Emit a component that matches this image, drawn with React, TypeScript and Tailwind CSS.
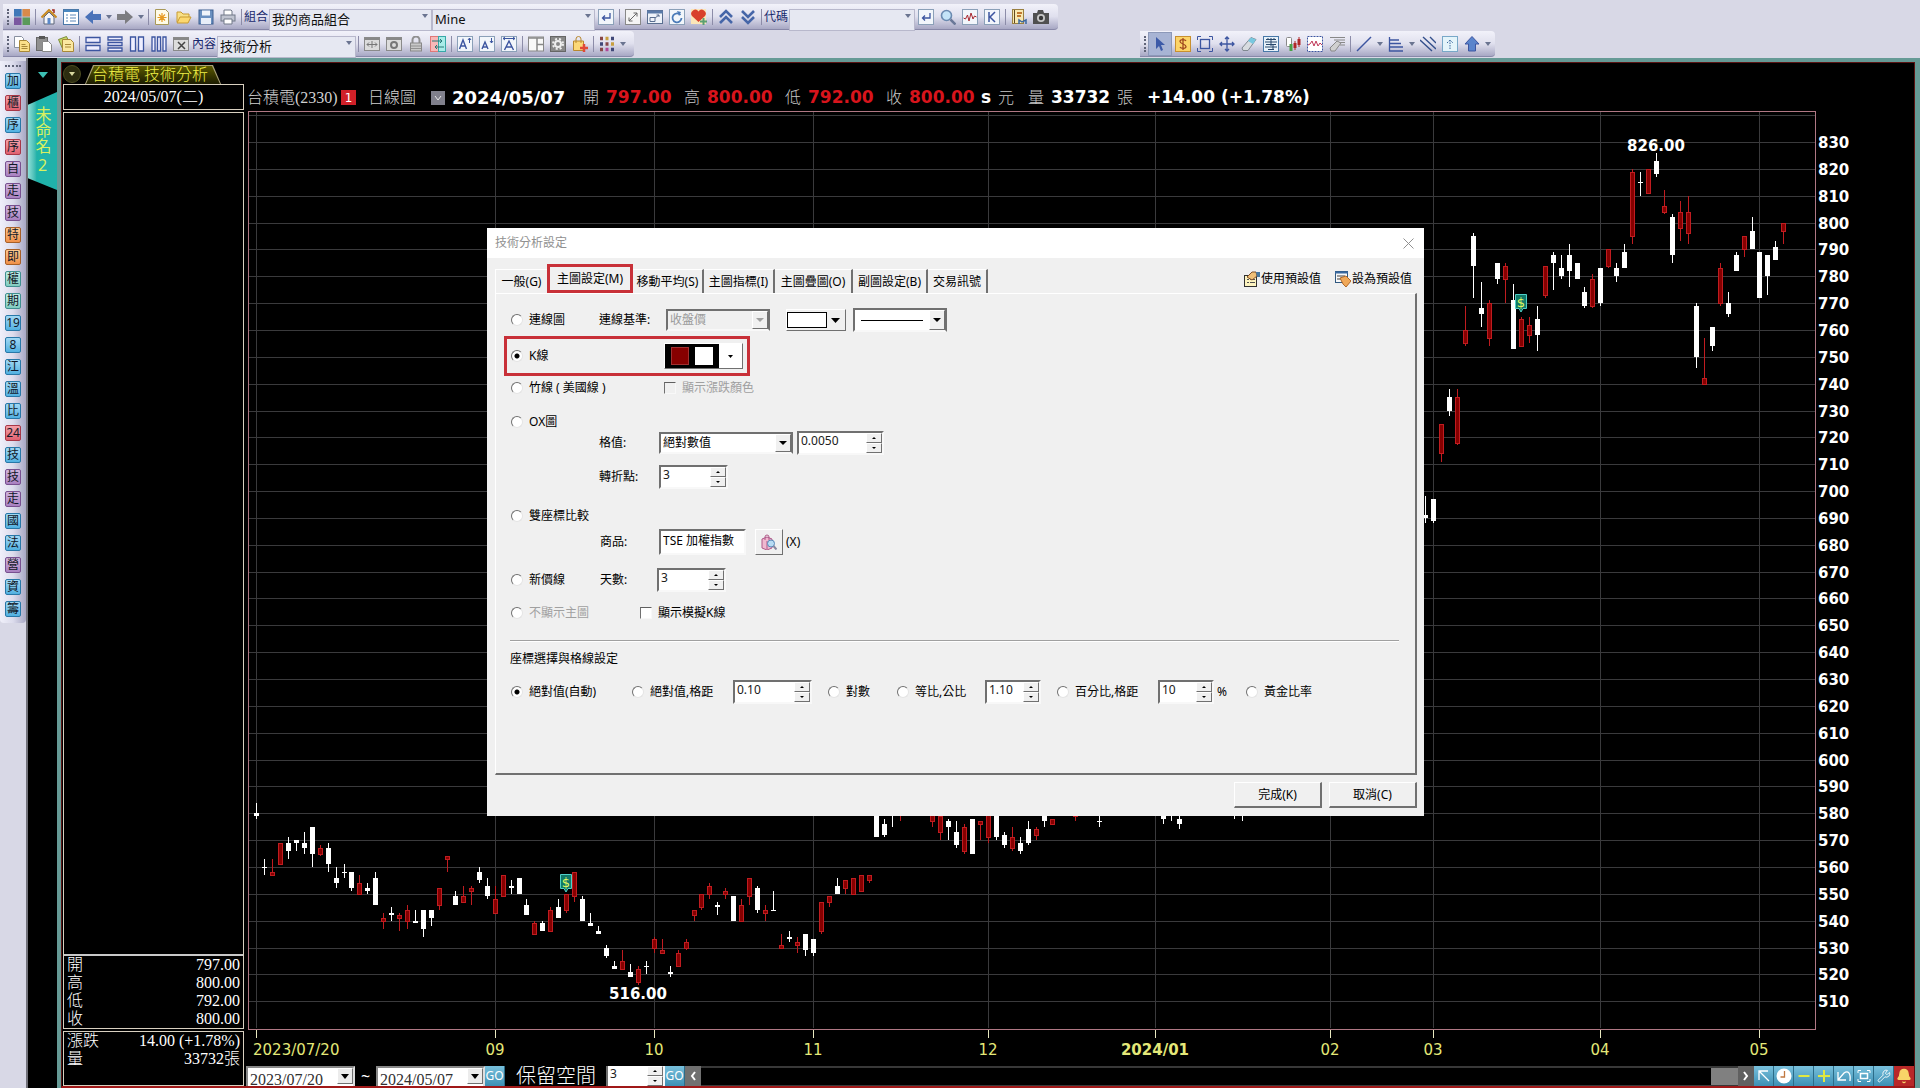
import type { ReactNode } from "react";
import { Bell, Wrench } from "lucide-react";

/* ---------- icons ---------- */

const ink = "#3c55a0";

const Svg = ({ children }: { children: ReactNode }) => (
  <svg viewBox="0 0 16 16" className="h-4 w-4 shrink-0" fill="none" aria-hidden="true">
    {children}
  </svg>
);

const frame = <rect x="0.5" y="0.5" width="15" height="15" fill="#f2f6fb" stroke="#8ba0b8" />;
const grayFrame = <rect x="0.5" y="1.5" width="15" height="13" fill="#dcdcdc" stroke="#8a8a8a" />;

const icons: Record<string, ReactNode> = {
  squares: (
    <>
      <rect x="0" y="0" width="8" height="8" fill="#3f78b8" />
      <rect x="8" y="0" width="8" height="8" fill="#d88a4a" />
      <rect x="0" y="8" width="8" height="8" fill="#7a58a0" />
      <rect x="8" y="8" width="8" height="8" fill="#5a9a5a" />
      <path d="M8 0v16M0 8h16" stroke="#b8c0d0" />
    </>
  ),
  home: (
    <>
      <path d="M3 8v7h10V8L8 3z" fill="#f4f4f8" stroke="#5a6478" />
      <path d="M0.5 8.5L8 1l7.500 7.500" stroke="#c88a20" strokeWidth="2" />
      <path d="M11 1h2v3" stroke="#a02820" strokeWidth="1.500" />
      <rect x="6.500" y="9" width="3" height="6" fill="#5a88c8" />
    </>
  ),
  panel: (
    <>
      <rect x="0.5" y="0.5" width="15" height="15" fill="#fff" stroke="#4a78a8" />
      <path d="M1 2h14" stroke="#4a88c0" strokeWidth="2" />
      <path d="M3 6h2M3 9h2M3 12h2M7 6h6M7 9h6M7 12h6" stroke="#5a88b8" />
    </>
  ),
  back: <path d="M0 8l8-7v4h8v6H8v4z" fill="#4a72b8" />,
  forward: <path d="M16 8L8 1v4H0v6h8v4z" fill="#7c7c80" />,
  fresh: (
    <>
      <path d="M1.500 0.500h10l3 3v12h-13z" fill="#fffbe8" stroke="#a89858" />
      <path d="M8 4v9M3.500 8.500h9M5 5.500l6 6M11 5.500l-6 6" stroke="#e89a20" strokeWidth="1.200" />
    </>
  ),
  open: (
    <>
      <path d="M1 13V3h4l2 2h6v3" fill="#f8e088" stroke="#c89a30" />
      <path d="M1 14l3-6h11l-3 6z" fill="#fcd870" stroke="#c89a30" />
    </>
  ),
  save: (
    <>
      <rect x="1" y="1" width="14" height="14" fill="#6a90c0" stroke="#3c5f90" />
      <rect x="4" y="1.500" width="8" height="5" fill="#f0f4fa" />
      <rect x="3" y="9" width="10" height="6" fill="#e8eef8" />
    </>
  ),
  print: (
    <>
      <path d="M4 6V1h7l1 1v4" fill="#fff" stroke="#707888" />
      <rect x="1" y="6" width="14" height="6" fill="#c0c4d0" stroke="#707888" />
      <path d="M4 10h8v5H4z" fill="#fff" stroke="#707888" />
    </>
  ),
  enter: (
    <>
      {frame}
      <path d="M12 4v5H5M7 6.500L4.500 9 7 11.500" stroke={ink} strokeWidth="1.300" />
    </>
  ),
  expand: (
    <>
      <rect x="0.5" y="0.5" width="15" height="15" fill="#f4f4f4" stroke="#888" />
      <path d="M4 12l8-8M8.500 4H12v3.500M4 8.500V12h3.500" stroke="#666" />
    </>
  ),
  popup: (
    <>
      <rect x="0.5" y="1.500" width="15" height="13" fill="#eef3fa" stroke="#5a6f90" />
      <path d="M0 3h16" stroke="#5a7aa8" strokeWidth="3" />
      <path d="M3 8.500h5v4H3zM8 9l4-3M9.500 6H12v2" stroke="#5a6f90" />
    </>
  ),
  refresh: (
    <>
      {frame}
      <path d="M11.500 6A4.500 4.500 0 1 0 12.500 9" stroke="#4a7ab8" strokeWidth="1.800" />
      <path d="M8 2l4 1-2 4z" fill="#4a7ab8" />
    </>
  ),
  heart: (
    <>
      <rect width="15" height="15" fill="#fbe6b8" />
      <path d="M7.500 13L1 7a3.500 3.500 0 0 1 6.500-4.500A3.500 3.500 0 0 1 14 7z" fill="#d8402c" />
      <path d="M12.500 9v7M9 12.500h7" stroke="#5aa070" strokeWidth="2" />
    </>
  ),
  up: <path d="M2 8l6-6 6 6M2 14l6-6 6 6" stroke="#4666a8" strokeWidth="2.600" />,
  down: <path d="M2 2l6 6 6-6M2 8l6 6 6-6" stroke="#4666a8" strokeWidth="2.600" />,
  search: (
    <>
      <circle cx="6.500" cy="6.500" r="5" fill="#c4e4f8" stroke="#6a8ab0" strokeWidth="1.600" />
      <path d="M10.500 10.500l5 5" stroke="#6a7898" strokeWidth="2.500" />
    </>
  ),
  wave: (
    <>
      {frame}
      <path d="M1.500 9l2 1 2-4 1.500 6 2-8 2 6 1.500-3 2 1" stroke="#a82830" />
    </>
  ),
  k: (
    <>
      {frame}
      <path d="M5 3v10M11 3L6 8l5 5" stroke={ink} strokeWidth="1.500" />
    </>
  ),
  book: (
    <>
      <rect x="1.500" y="0.500" width="11" height="14" fill="#f8e8b0" stroke="#9a8040" />
      <path d="M3.500 1v13" stroke="#604820" />
      <path d="M6 4h5M6 7h4" stroke="#c07830" strokeWidth="2" />
      <path d="M8 15v-4l3 2 4-2v4" stroke="#3c68a0" strokeWidth="1.500" />
    </>
  ),
  camera: (
    <>
      <path d="M0 4h4l1-3h5l1 3h5v11H0z" fill="#505050" />
      <circle cx="8" cy="9" r="4" fill="#c8c8c8" />
      <circle cx="8" cy="9" r="2.200" fill="#383838" />
    </>
  ),
  copy: (
    <>
      <path d="M0.500 0.500h7l2 2v9h-9z" fill="#fff" stroke="#8890a0" />
      <path d="M5.500 4.500h7l3 3v8h-10z" fill="#fbe08a" stroke="#a88838" />
      <path d="M7.500 8.500h4M7.500 10.500h6M7.500 12.500h6" stroke="#a88838" />
    </>
  ),
  paste: (
    <>
      <rect x="0.500" y="1.500" width="11" height="13" fill="#909090" stroke="#686868" />
      <rect x="3" y="0" width="6" height="3" fill="#555" />
      <path d="M6.500 5.500h6l3 3v7h-9z" fill="#fff" stroke="#888" />
    </>
  ),
  pages: (
    <>
      <path d="M0.500 3.500l8-3 4 9-8 3z" fill="#c8d868" stroke="#7a8a38" />
      <path d="M4.500 3.500h8l3 3v9h-11z" fill="#fbe8a0" stroke="#a88838" />
      <path d="M7 8.500h6M7 11h6" stroke="#a88838" />
    </>
  ),
  rows2: <path d="M1 1.500h14v5H1zM1 9.500h14v5H1z" fill="#eef" stroke={ink} strokeWidth="1.300" />,
  rows3: <path d="M1 1h14v3H1zM1 6.500h14v3H1zM1 12h14v3H1z" fill="#eef" stroke={ink} strokeWidth="1.300" />,
  cols2: <path d="M1.500 1h5v14h-5zM9.500 1h5v14h-5z" fill="#eef" stroke={ink} strokeWidth="1.300" />,
  cols3: <path d="M1 1h3v14H1zM6.500 1h3v14h-3zM12 1h3v14h-3z" fill="#eef" stroke={ink} strokeWidth="1.300" />,
  remove: (
    <>
      {grayFrame}
      <path d="M0 3h16" stroke="#888" strokeWidth="2" />
      <path d="M5 6l7 7M12 6l-7 7" stroke="#444" strokeWidth="1.500" />
    </>
  ),
  split: (
    <>
      {grayFrame}
      <path d="M1 3h14" stroke="#888" strokeWidth="2" />
      <path d="M3 8.500h10M5 6.500l-2 2 2 2M11 6.500l2 2-2 2M8 5v7" stroke="#777" />
    </>
  ),
  ring: (
    <>
      {grayFrame}
      <path d="M1 3h14" stroke="#888" strokeWidth="2" />
      <circle cx="8" cy="9" r="3" stroke="#777" strokeWidth="2" />
    </>
  ),
  lock: (
    <>
      <path d="M4.500 7V4a3.500 3.500 0 0 1 7 0v3" stroke="#909090" strokeWidth="2" />
      <rect x="2.500" y="7" width="11" height="8" fill="#c8c8c8" stroke="#888" />
      <path d="M3 10h10M3 12.500h10" stroke="#909090" />
    </>
  ),
  swap: (
    <>
      <rect x="0.500" y="0.500" width="8" height="15" fill="#f8b8b8" stroke="#e07878" />
      <rect x="8.500" y="0.500" width="7" height="15" fill="#a8ece8" stroke="#38a8a8" />
      <path d="M2 5h10M10 3l2 2-2 2M14 11H5M7 9l-2 2 2 2" stroke="#287878" />
    </>
  ),
  fontUp: (
    <>
      {frame}
      <path d="M2.500 13l3.500-9 3.500 9M4 10h4" stroke={ink} strokeWidth="1.400" />
      <path d="M12.500 7V2M11 4l1.500-2L14 4" stroke={ink} />
    </>
  ),
  fontDown: (
    <>
      {frame}
      <path d="M3 13l3-7 3 7M4 11h4" stroke={ink} strokeWidth="1.400" />
      <path d="M12.500 2v5M11 5l1.500 2L14 5" stroke={ink} />
    </>
  ),
  fontWide: (
    <>
      {frame}
      <path d="M3.500 14L8 5l4.500 9M5.500 11h5" stroke={ink} strokeWidth="1.400" />
      <path d="M2 2.500h12M4 1L2 2.500 4 4M12 1l2 1.500L12 4" stroke={ink} />
    </>
  ),
  layout: (
    <>
      <rect x="0.500" y="1" width="15" height="14" fill="#f8f8f8" stroke="#888" />
      <path d="M0.500 2h15M9 2v13M9 8.500h6" stroke="#888" strokeWidth="1.500" />
    </>
  ),
  gear: (
    <>
      <rect x="0.500" y="0.500" width="15" height="15" fill="#888" stroke="#666" />
      <circle cx="8" cy="8" r="5" stroke="#eee" strokeWidth="2" strokeDasharray="2 2" />
      <circle cx="8" cy="8" r="3" stroke="#eee" strokeWidth="2" />
    </>
  ),
  bag: (
    <>
      <path d="M1.500 5h10v9.500h-10z" fill="#fcd878" stroke="#b88830" />
      <path d="M4 7V3a2.500 2.500 0 0 1 5 0v4" stroke="#b88830" />
      <path d="M12 8v8M8 12h8" stroke="#e04838" strokeWidth="2.500" />
    </>
  ),
  palette: (
    <>
      <path d="M1 2.500h3M1 13.500h3M6.500 8h3" stroke="#884848" strokeWidth="3.500" />
      <path d="M6.500 2.500h3M12 8h3" stroke="#c8a040" strokeWidth="3.500" />
      <path d="M12 2.500h3M1 8h3M12 13.500h3" stroke="#404878" strokeWidth="3.500" />
      <path d="M6.500 13.500h3" stroke="#b04898" strokeWidth="3.500" />
    </>
  ),
  cursor: <path d="M4 1v12l3-3 2 5 2-1-2-5h4z" fill="#3c5aa8" />,
  dollar: (
    <>
      <rect x="0.500" y="0.500" width="15" height="15" fill="#fcd468" stroke="#c89030" />
      <path d="M11 5c-1-2-6-2-6 .5S11 8 11 10.500 6 13 5 11M8 2v12" stroke="#a04820" strokeWidth="1.300" />
    </>
  ),
  select: (
    <>
      <rect x="3.500" y="3.500" width="9" height="9" stroke={ink} strokeWidth="1.300" />
      <path d="M0.500 4V0.500H4M12 0.500h3.500V4M15.500 12v3.500H12M4 15.500H0.500V12" stroke={ink} />
    </>
  ),
  move: (
    <path d="M8 1v14M1 8h14M6 3l2-2 2 2M6 13l2 2 2-2M3 6L1 8l2 2M13 6l2 2-2 2" stroke={ink} strokeWidth="1.300" />
  ),
  eraser: (
    <>
      <path d="M1 12L10 1.500l5 2L7 14.500H2z" fill="#d8dce0" stroke="#808890" />
      <path d="M7 5l3-3.500 5 2L12 8z" fill="#78c8e0" />
    </>
  ),
  abacus: (
    <>
      <rect x="0.500" y="0.500" width="15" height="15" fill="#e8f2fa" stroke="#4878a8" />
      <path d="M3 3.500h10M2 6h12M3 8.500h10M2 11h12M5 13.500h6M8 2v8M5 2v2M11 2v2M10 9v5" stroke="#28486c" />
    </>
  ),
  candles: (
    <>
      <rect x="1.500" y="1.500" width="5" height="9" rx="1" fill="#fff" stroke="#888" />
      <path d="M6 8v7" stroke="#48a048" strokeWidth="3" />
      <path d="M10 5v9M14 1v10" stroke="#b02828" />
      <path d="M10 7v5M14 3v6" stroke="#b02828" strokeWidth="3" />
    </>
  ),
  dashed: (
    <>
      <rect x="0.500" y="0.500" width="15" height="15" fill="#fff" stroke={ink} strokeDasharray="2 1" />
      <path d="M1 9l2-1 2-3 2 5 2-5 2 5 2-3 2 2" stroke="#c03858" />
    </>
  ),
  wipe: (
    <>
      <path d="M1 1.500h15M5 4h11M9 6.500h7M11 9h5" stroke="#888" />
      <path d="M1 12l7-7 4 2-6 8H2z" fill="#d0d0d0" stroke="#888" />
    </>
  ),
  line: <path d="M1 15L15 1" stroke={ink} strokeWidth="1.500" />,
  levels: <path d="M1.500 1v14H15M2 4h9M2 7.500h11M2 11h13" stroke={ink} strokeWidth="1.300" />,
  hatch: <path d="M0 4l12 11M3 1l13 12M10 1l6 6" stroke="#34508c" strokeWidth="1.400" />,
  upFrame: (
    <>
      <rect x="0.500" y="0.500" width="15" height="15" fill="#e4f4fa" stroke="#78a8c8" />
      <path d="M8 13V4M5 7l3-3 3 3" stroke="#3c68a0" strokeDasharray="1.500 1" />
    </>
  ),
  upArrow: <path d="M8 0.500L15 8h-3.500v7h-7V8H1z" fill="#5a84cc" stroke={ink} />,
};

/* ---------- toolbars ---------- */

const Tool = ({ name }: { name: string }) => (
  <button type="button" aria-label={name} className="flex h-[22px] w-[22px] shrink-0 items-center justify-center">
    <Svg>{icons[name]}</Svg>
  </button>
);

const Caret = () => (
  <svg viewBox="0 0 6 4" className="h-1 w-1.5 shrink-0" aria-hidden="true">
    <path d="M0 0h6L3 4z" fill="#6a7490" />
  </svg>
);

const CaretTool = () => (
  <button type="button" aria-label="more" className="flex h-[22px] w-2.5 shrink-0 items-center justify-center">
    <Caret />
  </button>
);

const Sep = () => <span className="mx-0.5 h-4 w-px shrink-0 bg-[#8c8ca8]" />;

const Grip = () => <span className="mr-0.5 h-4 w-0.5 shrink-0 border-l-2 border-dotted border-[#606478]" />;

const barClass =
  "flex h-[26px] shrink-0 items-center rounded-r-sm border-b border-[#8888a8] bg-linear-to-b from-[#f2f2fa] via-[#e0e0ee] to-[#a8a8c4] pl-1";

const ToolSelect = ({ label, value, width }: { label: string; value: string; width: string }) => (
  <div className={"relative h-[22px] shrink-0 " + width}>
    <select
      aria-label={label}
      defaultValue={value}
      className="h-full w-full appearance-none border border-[#b8b8cc] bg-[#e6e8f2] pb-0.5 pl-0.5 text-[13px] leading-[18px] text-[#101010]"
    >
      <option>{value}</option>
    </select>
    <span className="pointer-events-none absolute top-2 right-1 flex">
      <Caret />
    </span>
  </div>
);

const Caption = ({ children }: { children: ReactNode }) => (
  <span className="w-[25px] shrink-0 text-xs whitespace-nowrap text-[#18286c]">{children}</span>
);

function Toolbars() {
  return (
    <header className="flex flex-col gap-px overflow-hidden bg-[#d8d8e6] pt-1 pb-px pl-[3px]">
      <div className="flex">
        <div className={barClass + " pr-1.5"}>
          <Grip />
          <Tool name="squares" />
          <Sep />
          <Tool name="home" />
          <Tool name="panel" />
          <Tool name="back" />
          <CaretTool />
          <Tool name="forward" />
          <CaretTool />
          <Sep />
          <Tool name="fresh" />
          <Tool name="open" />
          <Tool name="save" />
          <Tool name="print" />
          <Sep />
          <Caption>組合</Caption>
          <ToolSelect label="組合" value="我的商品組合" width="w-[163px]" />
          <ToolSelect label="清單" value="Mine" width="w-[163px]" />
          <Tool name="enter" />
          <Sep />
          <Tool name="expand" />
          <Tool name="popup" />
          <Tool name="refresh" />
          <Tool name="heart" />
          <Sep />
          <Tool name="up" />
          <Tool name="down" />
          <Sep />
          <Caption>代碼</Caption>
          <ToolSelect label="代碼" value="" width="w-[126px]" />
          <Tool name="enter" />
          <Tool name="search" />
          <Tool name="wave" />
          <Tool name="k" />
          <Sep />
          <Tool name="book" />
          <Tool name="camera" />
        </div>
      </div>
      <div className="flex">
        <div className={barClass + " pr-1.5"}>
          <Grip />
          <Tool name="copy" />
          <Tool name="paste" />
          <Tool name="pages" />
          <Sep />
          <Tool name="rows2" />
          <Tool name="rows3" />
          <Tool name="cols2" />
          <Tool name="cols3" />
          <Tool name="remove" />
          <Caption>內容</Caption>
          <ToolSelect label="內容" value="技術分析" width="w-[139px]" />
          <Sep />
          <Tool name="split" />
          <Tool name="ring" />
          <Tool name="lock" />
          <Tool name="swap" />
          <Sep />
          <Tool name="fontUp" />
          <Tool name="fontDown" />
          <Tool name="fontWide" />
          <Sep />
          <Tool name="layout" />
          <Tool name="gear" />
          <Tool name="bag" />
          <Sep />
          <Tool name="palette" />
          <CaretTool />
        </div>
        <div className={barClass + " ml-[506px] pr-0.5"}>
          <Grip />
          <span className="border border-[#8c98b8] bg-[#a8b4d4]">
            <Tool name="cursor" />
          </span>
          <Tool name="dollar" />
          <Tool name="select" />
          <Tool name="move" />
          <Tool name="eraser" />
          <Tool name="abacus" />
          <Tool name="candles" />
          <Tool name="dashed" />
          <Tool name="wipe" />
          <Sep />
          <Tool name="line" />
          <CaretTool />
          <Tool name="levels" />
          <CaretTool />
          <Tool name="hatch" />
          <Tool name="upFrame" />
          <Tool name="upArrow" />
          <CaretTool />
        </div>
      </div>
    </header>
  );
}

/* ---------- left side ---------- */

const tones: Record<string, string> = {
  b: "border-[#2878a8] from-[#a0d8f4] to-[#50b0e0]",
  r: "border-[#a83848] from-[#f4a0a8] to-[#e06070]",
  p: "border-[#785090] from-[#d0b4dc] to-[#a880c0]",
  o: "border-[#a86028] from-[#fcc890] to-[#f09048]",
  g: "border-[#409090] from-[#c0ece4] to-[#80ccc0]",
};

const shortcuts = [
  ["加", "b"], ["櫃", "r"], ["序", "b"], ["序", "r"], ["自", "p"],
  ["走", "p"], ["技", "p"], ["特", "o"], ["即", "o"], ["權", "g"],
  ["期", "g"], ["19", "b"], ["8", "b"], ["江", "b"], ["溫", "b"],
  ["比", "b"], ["24", "r"], ["技", "b"], ["技", "p"], ["走", "p"],
  ["國", "b"], ["法", "b"], ["營", "p"], ["資", "b"], ["籌", "b"],
];

function Shortcuts() {
  return (
    <nav className="w-7 shrink-0 border-r-2 border-[#707078] bg-[#d8d8e6] pt-[3px]">
      <div className="flex flex-col items-center gap-1.5 rounded-b-sm bg-linear-to-r from-[#f0f0fa] via-[#dcdcec] to-[#a8a8c4] pt-1 pb-1.5">
        <span className="h-0.5 w-4 border-t-2 border-dotted border-[#606478]" />
        {shortcuts.map(([text, tone], i) => (
          <button
            key={i}
            type="button"
            className={
              "flex h-4 w-4 items-center justify-center rounded-xs border bg-linear-to-b text-xs leading-3 text-[#101828] " +
              tones[tone]
            }
          >
            {text}
          </button>
        ))}
      </div>
    </nav>
  );
}

function PageStrip() {
  return (
    <div className="w-[29px] shrink-0 bg-black pt-3.5">
      <svg viewBox="0 0 10 6" className="mx-auto h-1.5 w-2.5" aria-hidden="true">
        <path d="M0 0h10L5 6z" fill="#3cc0b4" />
      </svg>
      <button
        type="button"
        className="mt-3.5 flex h-[98px] w-full items-center justify-center bg-linear-to-r from-[#8ce0d8] via-[#20b2aa] via-30% to-[#20b2aa] text-base leading-5 text-[#d8f060] [clip-path:polygon(0_13%,100%_0,100%_100%,0_88%)] [text-orientation:upright] [writing-mode:vertical-rl]"
      >
        未命名2
      </button>
    </div>
  );
}

const serif = "font-['Liberation_Serif','Noto_Sans_CJK_TC',serif] font-light";

const QuoteRow = ({ name, value }: { name: string; value: string }) => (
  <tr className="h-[18px]">
    <th className="pl-[3px] text-left font-light">{name}</th>
    <td className="pr-[3px] text-right">{value}</td>
  </tr>
);

function QuotePanel() {
  return (
    <aside className={"flex w-[184px] shrink-0 flex-col gap-0.5 pr-0.5 pl-px text-base leading-[18px] text-white " + serif}>
      <div className="flex h-[26px] items-center justify-center border border-[#d8d0c0]">2024/05/07(二)</div>
      <div className="flex grow flex-col border border-[#d8d0c0]">
        <div className="grow" />
        <table className="w-full border-t-2 border-[#c8c8c8]">
          <tbody>
            <QuoteRow name="開" value="797.00" />
            <QuoteRow name="高" value="800.00" />
            <QuoteRow name="低" value="792.00" />
            <QuoteRow name="收" value="800.00" />
          </tbody>
        </table>
      </div>
      <div className="h-[55px] border border-[#d8d0c0]">
        <table className="w-full">
          <tbody>
            <QuoteRow name="漲跌" value="14.00 (+1.78%)" />
            <QuoteRow name="量" value="33732張" />
          </tbody>
        </table>
      </div>
    </aside>
  );
}

/* ---------- chart ---------- */

// [slot, up?, high, body top, body bottom, low]
const candles: [number, number, number, number, number, number][] = [
  [0, 0, 584, 580, 579, 578], [1, 0, 563, 560, 560, 557], [2, 1, 563, 558, 557, 557], [3, 1, 569, 569, 561, 561],
  [4, 0, 571, 569, 566, 563], [5, 0, 570, 570, 569, 566], [6, 0, 573, 569, 567, 565], [7, 0, 575, 575, 565, 560],
  [8, 1, 568, 567, 565, 564], [9, 0, 569, 567, 561, 558], [10, 0, 560, 556, 554, 552], [11, 0, 561, 558, 558, 556],
  [12, 0, 558, 558, 552, 551], [13, 1, 557, 554, 550, 550], [14, 0, 554, 552, 551, 550], [15, 0, 558, 556, 546, 546],
  [16, 1, 543, 541, 540, 537], [17, 0, 545, 543, 542, 540], [18, 1, 543, 542, 541, 536], [19, 1, 546, 544, 540, 537],
  [20, 0, 544, 540, 539, 539], [21, 0, 544, 544, 537, 534], [22, 0, 544, 544, 541, 538], [23, 1, 552, 552, 546, 544],
  [24, 1, 564, 564, 563, 558], [25, 0, 551, 549, 546, 546], [26, 1, 553, 549, 547, 547], [27, 1, 553, 552, 551, 546],
  [28, 0, 560, 558, 555, 554], [29, 0, 556, 553, 549, 548], [30, 1, 553, 548, 543, 543], [31, 1, 557, 557, 549, 549],
  [32, 0, 555, 553, 552, 550], [33, 0, 556, 556, 550, 550], [34, 0, 548, 546, 542, 542], [35, 1, 540, 539, 535, 535],
  [36, 0, 540, 539, 536, 536], [37, 1, 545, 544, 536, 536], [38, 0, 548, 545, 541, 541], [39, 1, 550, 550, 544, 543],
  [40, 1, 558, 558, 549, 547], [41, 0, 549, 548, 540, 540], [42, 0, 543, 539, 538, 538], [43, 0, 538, 536, 535, 535],
  [44, 0, 531, 530, 527, 526], [45, 0, 525, 523, 522, 522], [46, 1, 529, 525, 522, 522], [47, 0, 524, 521, 519, 519],
  [48, 1, 523, 522, 517, 516], [49, 0, 525, 523, 523, 520], [50, 1, 534, 533, 530, 528], [51, 1, 533, 529, 528, 528],
  [52, 0, 523, 521, 520, 519], [53, 1, 529, 528, 523, 523], [54, 1, 533, 532, 530, 529], [55, 1, 544, 544, 542, 540],
  [56, 1, 550, 550, 545, 544], [57, 1, 554, 553, 550, 548], [58, 0, 547, 546, 545, 542], [59, 1, 552, 551, 550, 548],
  [60, 0, 549, 549, 540, 540], [61, 1, 548, 546, 540, 540], [62, 1, 556, 556, 549, 546], [63, 0, 553, 552, 544, 543],
  [64, 1, 546, 544, 543, 540], [65, 0, 551, 544, 544, 544], [66, 1, 535, 531, 530, 530], [67, 0, 536, 534, 533, 532],
  [68, 1, 534, 532, 531, 528], [69, 0, 535, 535, 529, 527], [70, 0, 533, 533, 528, 527], [71, 1, 547, 547, 536, 535],
  [72, 1, 549, 549, 547, 545], [73, 0, 556, 553, 550, 550], [74, 1, 555, 555, 552, 550], [75, 1, 556, 556, 550, 550],
  [76, 1, 557, 557, 551, 551], [77, 1, 557, 557, 555, 554], [78, 0, 585, 585, 571, 571], [79, 0, 578, 576, 572, 571],
  [80, 0, 585, 583, 580, 575], [81, 1, 583, 583, 580, 577], [85, 1, 583, 581, 577, 575], [86, 1, 582, 579, 573, 570],
  [87, 0, 578, 577, 575, 570], [88, 0, 577, 573, 568, 567], [89, 1, 576, 575, 566, 565], [90, 0, 578, 578, 565, 565],
  [91, 1, 577, 577, 576, 570], [92, 1, 580, 580, 571, 569], [93, 0, 580, 580, 571, 570], [94, 0, 573, 572, 568, 567],
  [95, 1, 575, 571, 567, 566], [96, 0, 571, 569, 566, 565], [97, 0, 577, 574, 569, 568], [98, 1, 575, 574, 572, 570],
  [99, 0, 580, 580, 577, 575], [100, 1, 578, 578, 576, 576], [103, 1, 582, 580, 579, 577], [106, 0, 580, 577, 577, 575],
  [114, 0, 580, 580, 578, 576], [115, 0, 582, 581, 580, 577], [116, 0, 580, 578, 576, 574], [123, 0, 581, 580, 580, 578],
  [124, 0, 581, 580, 580, 577],
  [147, 0, 698, 691, 690, 688], [148, 0, 697, 697, 689, 688], [149, 1, 725, 725, 714, 711], [150, 0, 738, 735, 730, 728],
  [151, 1, 738, 735, 718, 717], [152, 1, 769, 760, 755, 754], [153, 0, 796, 795, 784, 772], [154, 0, 778, 768, 766, 761],
  [155, 1, 771, 770, 757, 754], [156, 0, 785, 785, 779, 777], [157, 1, 785, 784, 779, 770], [158, 0, 777, 771, 753, 753],
  [159, 1, 765, 764, 754, 754], [160, 1, 765, 762, 758, 755], [161, 0, 769, 764, 758, 752], [162, 1, 784, 784, 773, 772],
  [163, 0, 789, 788, 785, 775], [164, 0, 788, 783, 780, 779], [165, 0, 792, 788, 782, 776], [166, 0, 785, 785, 779, 779],
  [167, 0, 776, 774, 769, 768], [168, 1, 781, 779, 769, 768], [169, 0, 783, 783, 770, 769], [170, 1, 790, 790, 784, 783],
  [171, 0, 785, 783, 780, 778], [172, 0, 792, 789, 783, 783], [173, 1, 820, 819, 795, 792], [174, 0, 819, 815, 815, 810],
  [175, 1, 820, 820, 811, 811], [176, 0, 826, 823, 818, 817], [177, 1, 812, 806, 804, 803], [178, 0, 803, 802, 788, 785],
  [179, 1, 808, 804, 798, 793], [180, 1, 810, 804, 796, 792], [181, 0, 770, 769, 750, 746], [182, 1, 757, 742, 740, 740],
  [183, 0, 761, 761, 754, 752], [184, 1, 785, 783, 770, 769], [185, 0, 774, 770, 766, 765], [186, 0, 789, 788, 782, 782],
  [187, 1, 795, 795, 790, 787], [188, 0, 802, 797, 790, 790], [189, 0, 789, 789, 772, 772], [190, 0, 788, 788, 780, 773],
  [191, 0, 793, 791, 786, 786], [192, 1, 800, 800, 797, 792],
];

const months: [number, string][] = [
  [30, "09"], [50, "10"], [70, "11"], [92, "12"], [113, "2024/01"], [135, "02"], [148, "03"], [169, "04"], [189, "05"],
];

const prices = Array.from({ length: 33 }, (_, i) => 830 - i * 10);

const px = (slot: number) => Math.round(10 + slot * 7.955);
const py = (price: number) => Math.round(32 + (830 - price) * 2.685);

const Dividend = ({ slot, price }: { slot: number; price: number }) => (
  <g transform={`translate(${px(slot)} ${py(price)})`}>
    <path d="M-5.500 -8.500h11v14h-3.500L0 9l-2-3.500h-3.500z" fill="#107868" stroke="#50d0c8" />
    <text y="4" textAnchor="middle" fontSize="13" fill="#e0f860">
      $
    </text>
  </g>
);

function PriceChart() {
  return (
    <svg viewBox="0 0 1668 956" className="block h-auto w-full font-['DejaVu_Sans',sans-serif]" role="img" aria-label="日線圖">
      <g stroke="#3a3a3c" shapeRendering="crispEdges">
        {[840, ...prices].map((p) => (
          <line key={p} x1="3" x2="1569" y1={py(p)} y2={py(p)} />
        ))}
        {[0, ...months.map(([slot]) => slot)].map((slot) => (
          <line key={slot} x1={px(slot)} x2={px(slot)} y1="2" y2="918" />
        ))}
      </g>
      <g stroke="#e8e8c0" shapeRendering="crispEdges">
        {[0, ...months.map(([slot]) => slot)].map((slot) => (
          <line key={slot} x1={px(slot)} x2={px(slot)} y1="919" y2="928" />
        ))}
      </g>
      <rect x="2" y="1" width="1567" height="918" fill="none" stroke="#b07884" shapeRendering="crispEdges" />

      {candles.map(([slot, up, high, top, bottom, low]) => {
        const x = px(slot);
        const h = Math.max(py(bottom) - py(top), up ? 3 : 1);
        return (
          <g key={slot} shapeRendering="crispEdges">
            <rect x={x} y={py(high)} width="1" height={Math.max(py(low) - py(high), 1)} fill={up ? "#c01c20" : "#fff"} />
            {up ? (
              <rect x={x - 1.5} y={py(top) + 0.5} width="4" height={h} fill="#860000" stroke="#c01c20" />
            ) : (
              <rect x={x - 2} y={py(top)} width="5" height={h} fill="#fff" />
            )}
          </g>
        );
      })}
      <Dividend slot={39} price={554} />
      <Dividend slot={159} price={770} />

      <g fill="#fff" fontSize="15" fontWeight="700">
        {prices.map((p) => (
          <text key={p} x="1572" y={py(p) + 6}>
            {p}
          </text>
        ))}
        <text x="1410" y="41" textAnchor="middle">
          826.00
        </text>
        <text x="392" y="889" textAnchor="middle">
          516.00
        </text>
      </g>
      <g fill="#e4e878" fontSize="15">
        <text x="7" y="945">
          2023/07/20
        </text>
        {months.map(([slot, text]) => (
          <text key={text} x={px(slot)} y="945" textAnchor="middle" fontWeight={text.length > 2 ? 700 : 400}>
            {text}
          </text>
        ))}
      </g>
    </svg>
  );
}

const Quote = ({ name, value, width = "w-[101px]" }: { name: string; value: string; width?: string }) => (
  <span className={"flex items-center gap-[7px] " + width}>
    <span className={"text-base text-[#c8c8c8] " + serif}>{name}</span>
    <b className="text-[#d8141c]">{value}</b>
  </span>
);

function ChartHeader() {
  return (
    <div className="flex h-[26px] items-center overflow-hidden pt-px font-['DejaVu_Sans',sans-serif] text-[17px] whitespace-nowrap text-white">
      <span className={"w-[95px] pl-px text-base text-[#d0d0d0] " + serif}>台積電(2330)</span>
      <span className="flex h-[15px] w-[15px] items-center justify-center bg-[#d02028] text-xs">1</span>
      <span className={"w-[75px] pl-3 text-base text-[#d0d0d0] " + serif}>日線圖</span>
      <button type="button" aria-label="週期" className="flex h-3.5 w-3.5 items-center justify-center bg-[#80808c]">
        <svg viewBox="0 0 8 8" className="h-2 w-2" fill="none" aria-hidden="true">
          <path d="M1 2l3 4 3-4" stroke="#e8e8e8" />
        </svg>
      </button>
      <b className="w-[138px] pl-[7px] text-lg">2024/05/07</b>
      <Quote name="開" value="797.00" />
      <Quote name="高" value="800.00" />
      <Quote name="低" value="792.00" />
      <Quote name="收" value="800.00" width="w-[95px]" />
      <b className="w-[17px]">s</b>
      <span className={"w-[30px] text-base text-[#c8c8c8] " + serif}>元</span>
      <span className={"w-[23px] text-base text-[#c8c8c8] " + serif}>量</span>
      <b className="w-[66px]">33732</b>
      <span className={"w-[30px] text-base text-[#c8c8c8] " + serif}>張</span>
      <b>+14.00 (+1.78%)</b>
    </div>
  );
}

/* ---------- bottom bar ---------- */

const tileClass = "flex h-5 w-5 shrink-0 items-center justify-center border-r border-[#2c6c88] bg-linear-to-b from-[#78c0dc] to-[#3c90b4] text-white";

const DateSelect = ({ label, value }: { label: string; value: string }) => (
  <div className="relative h-5 w-[109px] shrink-0">
    <select
      aria-label={label}
      defaultValue={value}
      className={"h-full w-full appearance-none border-2 border-b-0 border-[#888] border-r-[#ddd] bg-white px-0.5 pt-1 text-base leading-4 text-[#303030] " + serif}
    >
      <option>{value}</option>
    </select>
    <span className="pointer-events-none absolute top-0.5 right-0.5 flex h-4 w-4 items-center justify-center border border-[#707070] border-t-white border-l-white bg-[#ececec]">
      <svg viewBox="0 0 8 5" className="h-[5px] w-2" aria-hidden="true">
        <path d="M0 0h8L4 5z" fill="#000" />
      </svg>
    </span>
  </div>
);

function BottomBar() {
  return (
    <div className="flex h-5 items-center overflow-hidden text-white">
      <DateSelect label="起始日期" value="2023/07/20" />
      <span className="w-[21px] text-center text-base">~</span>
      <DateSelect label="結束日期" value="2024/05/07" />
      <button type="button" className={tileClass + " text-xs"}>GO</button>
      <label htmlFor="reserve" className={"w-[101px] pl-[11px] text-xl leading-5 whitespace-nowrap " + serif}>
        保留空間
      </label>
      <Spinner id="reserve" value="3" width="w-[59px]" />
      <button type="button" className={tileClass + " text-xs"}>GO</button>
      <button type="button" aria-label="向左" className="flex h-5 w-4 shrink-0 items-center justify-center bg-[#707070]">
        <svg viewBox="0 0 6 10" className="h-2.5 w-1.5" fill="none" aria-hidden="true">
          <path d="M5 1L2 5l3 4" stroke="#fff" strokeWidth="2" />
        </svg>
      </button>
      <div className="flex h-5 grow justify-end border-t-2 border-b border-[#383838] bg-black">
        <span className="w-[27px] bg-[#808080]" />
      </div>
      <button type="button" aria-label="向右" className="flex h-5 w-4 shrink-0 items-center justify-center bg-[#606060]">
        <svg viewBox="0 0 6 10" className="h-2.5 w-1.5" fill="none" aria-hidden="true">
          <path d="M1 1l3 4-3 4" stroke="#fff" strokeWidth="2" />
        </svg>
      </button>
      <button type="button" aria-label="指標" className={tileClass}>
        <Svg>
          <path d="M3 12V3h9M3 3l10 10" stroke="#fff" strokeWidth="1.300" />
        </Svg>
      </button>
      <button type="button" aria-label="時間" className={tileClass}>
        <Svg>
          <circle cx="8" cy="8" r="7.500" fill="#fff" />
          <path d="M8.500 3v6H4.500" stroke="#c07840" strokeWidth="1.300" />
        </Svg>
      </button>
      <button type="button" aria-label="縮小" className={tileClass}>
        <Svg>
          <path d="M2.500 8h11" stroke="#e0e840" strokeWidth="2" />
        </Svg>
      </button>
      <button type="button" aria-label="放大" className={tileClass}>
        <Svg>
          <path d="M2 8h12M8 2v12" stroke="#e0e840" strokeWidth="2" />
        </Svg>
      </button>
      <button type="button" aria-label="還原" className={tileClass}>
        <Svg>
          <path d="M2 4v8h8M2 12l6-7c4-3 7 0 6 8" stroke="#fff" strokeWidth="1.300" />
        </Svg>
      </button>
      <button type="button" aria-label="全螢幕" className={tileClass}>
        <Svg>
          <rect x="4.500" y="5.500" width="7" height="5" stroke="#fff" strokeWidth="1.500" />
          <path d="M2 5V2.500h3M11 2.500h3V5M14 11v2.500h-3M5 13.500H2V11" stroke="#fff" />
        </Svg>
      </button>
      <button type="button" aria-label="設定" className={tileClass}>
        <Wrench size={14} strokeWidth={1.5} />
      </button>
      <button type="button" aria-label="警示" className="flex h-5 w-5 shrink-0 items-center justify-center bg-[#b82828]">
        <Bell size={16} fill="#f8d468" stroke="#f8d468" />
      </button>
    </div>
  );
}

/* ---------- settings dialog ---------- */

const sunken = "border-2 border-[#707070] border-r-[#f8f8f8] border-b-[#f8f8f8] bg-white";
const raised = "border border-[#707070] border-t-white border-l-white bg-[#f0f0f0]";

function Spinner({ id, value, width, label }: { id?: string; value: string; width: string; label?: string }) {
  return (
    <span className={"flex h-6 shrink-0 " + sunken + " " + width}>
      <input id={id} aria-label={label} defaultValue={value} className="h-4 w-0 min-w-0 grow pl-0.5 text-xs leading-4 text-[#202020]" />
      <span className="flex w-4 shrink-0 flex-col">
        <button type="button" aria-label="增加" className={"flex h-2.5 items-center justify-center " + raised}>
          <svg viewBox="0 0 4 2" className="h-0.5 w-1" aria-hidden="true">
            <path d="M0 2h4L2 0z" fill="#000" />
          </svg>
        </button>
        <button type="button" aria-label="減少" className={"flex h-2.5 items-center justify-center " + raised}>
          <svg viewBox="0 0 4 2" className="h-0.5 w-1" aria-hidden="true">
            <path d="M0 0h4L2 2z" fill="#000" />
          </svg>
        </button>
      </span>
    </span>
  );
}

function DropDown({ label, value, width, disabled }: { label: string; value: string; width: string; disabled?: boolean }) {
  return (
    <span className={"relative block h-[22px] shrink-0 " + width}>
      <select
        aria-label={label}
        defaultValue={value}
        disabled={disabled}
        className={
          "h-full w-full appearance-none border-2 border-[#707070] border-b-[#f8f8f8] pl-0.5 text-xs leading-4 " +
          (disabled ? "bg-[#f0f0f0] text-[#9a9a9a]" : "bg-white text-black")
        }
      >
        <option>{value}</option>
      </select>
      <span className={"pointer-events-none absolute top-0.5 right-0.5 flex h-[18px] w-4 items-center justify-center " + raised}>
        <svg viewBox="0 0 8 4" className="h-1 w-2" aria-hidden="true">
          <path d="M0 0h8L4 4z" fill={disabled ? "#a0a0a0" : "#000"} />
        </svg>
      </span>
    </span>
  );
}

type RadioProps = { group: string; text: string; width?: string; checked?: boolean; disabled?: boolean };

const Radio = ({ group, text, width = "w-[88px]", checked, disabled }: RadioProps) => (
  <label className={"flex shrink-0 items-center gap-1.5 whitespace-nowrap " + width + (disabled ? " text-[#a0a0a0]" : "")}>
    <input
      type="radio"
      name={group}
      defaultChecked={checked}
      disabled={disabled}
      className="h-3 w-3 shrink-0 appearance-none rounded-full border border-[#707070] border-r-[#e4e4e4] border-b-[#e4e4e4] bg-white checked:bg-[radial-gradient(circle,#000_2px,#fff_3px)]"
    />
    {text}
  </label>
);

const Check = ({ text, disabled }: { text: string; disabled?: boolean }) => (
  <label className={"flex items-center gap-1.5 whitespace-nowrap" + (disabled ? " text-[#a0a0a0]" : "")}>
    <input
      type="checkbox"
      disabled={disabled}
      className="h-3 w-3 shrink-0 appearance-none border border-[#707070] border-t-[#606060] border-r-[#f8f8f8] border-b-[#f8f8f8] bg-white disabled:bg-[#f0f0f0]"
    />
    {text}
  </label>
);

const tabClass = "flex h-6 shrink-0 items-center justify-center border-t border-t-white border-r-2 border-r-[#707070] whitespace-nowrap";

function SettingsDialog() {
  return (
    <section
      role="dialog"
      aria-label="技術分析設定"
      className="absolute top-[228px] left-[487px] w-[937px] bg-[#f0f0f0] text-xs leading-4 text-black"
    >
      <div className="flex h-[30px] items-center justify-between bg-white pr-2.5 pl-2 text-[#909090]">
        <h2>技術分析設定</h2>
        <button type="button" aria-label="關閉" className="flex">
          <svg viewBox="0 0 11 11" className="h-[11px] w-[11px]" aria-hidden="true">
            <path d="M0.500 0.500l10 10M10.500 0.500l-10 10" stroke="#909090" />
          </svg>
        </button>
      </div>

      <div className="flex h-[35px] items-end pl-2">
        <div role="tablist" className="flex grow items-end">
          <button type="button" role="tab" className="flex h-6 w-[52px] items-center justify-center border-t border-l border-white">
            一般(G)
          </button>
          <button type="button" role="tab" aria-selected="true" className="flex h-[29px] w-[86px] items-center justify-center border-3 border-[#c83038]">
            主圖設定(M)
          </button>
          <button type="button" role="tab" className={tabClass + " w-[71px]"}>移動平均(S)</button>
          <button type="button" role="tab" className={tabClass + " w-[71px]"}>主圖指標(I)</button>
          <button type="button" role="tab" className={tabClass + " w-[78px]"}>主圖疊圖(O)</button>
          <button type="button" role="tab" className={tabClass + " w-[75px]"}>副圖設定(B)</button>
          <button type="button" role="tab" className={tabClass + " w-[60px]"}>交易訊號</button>
        </div>
        <div className="flex gap-3.5 pr-3 pb-1.5">
          <button type="button" className="flex items-center gap-px">
            <Svg>
              <rect x="0.500" y="4.500" width="12" height="11" fill="#fdf4c0" stroke="#303030" />
              <path d="M3 8.500h2M3 11.500h2M6 8.500h5M6 11.500h5" stroke="#505050" />
              <path d="M3 6l5-5h4l1 4-5 4z" fill="#f0c078" stroke="#805028" />
              <path d="M12 1h4v5h-3z" fill="#4878a0" />
            </Svg>
            使用預設值
          </button>
          <button type="button" className="flex items-center gap-px">
            <Svg>
              <rect x="0.500" y="0.500" width="12" height="11" fill="#f8f8f8" stroke="#305880" />
              <path d="M0 1.500h13" stroke="#3868a0" strokeWidth="2" />
              <path d="M2 5h8M2 8h5" stroke="#404040" />
              <path d="M5 7l6-2 5 5-5 6-3-3z" fill="#f0a858" stroke="#b06828" />
            </Svg>
            設為預設值
          </button>
        </div>
      </div>

      <div className="mr-[7px] ml-2 border-t border-r-2 border-b-2 border-l border-t-white border-r-[#707070] border-b-[#707070] border-l-white pt-2.5 pb-[69px] pl-2">
        <div className="flex h-8 items-center pl-[7px]">
          <Radio group="style" text="連線圖" />
          <span className="w-[67px]">連線基準:</span>
          <DropDown label="連線基準" value="收盤價" width="w-[104px]" disabled />
          <button type="button" aria-label="線色" className={"ml-4 flex h-[22px] w-[60px] items-center gap-1 " + raised}>
            <span className="h-4 w-10 border border-black bg-white" />
            <svg viewBox="0 0 9 5" className="h-[5px] w-[9px]" aria-hidden="true">
              <path d="M0 0h9L4.500 5z" fill="#000" />
            </svg>
          </button>
          <button type="button" aria-label="線型" className="ml-[7px] flex h-6 w-[94px] items-center border-2 border-[#707070] border-b-[#f8f8f8] bg-white pl-1.5">
            <span className="h-px w-[62px] bg-black" />
            <span className={"ml-auto flex h-5 w-4 items-center justify-center " + raised}>
              <svg viewBox="0 0 8 4" className="h-1 w-2" aria-hidden="true">
                <path d="M0 0h8L4 4z" fill="#000" />
              </svg>
            </span>
          </button>
        </div>
        <div className="flex h-10 w-[246px] items-center border-3 border-[#c83038] pl-1">
          <Radio group="style" text="K線" width="w-[153px]" checked />
          <button type="button" aria-label="K線顏色" className={"flex h-[26px] w-[79px] items-stretch " + raised}>
            <span className="flex w-[53px] items-center justify-center gap-1.5 bg-black">
              <span className="h-[18px] w-[18px] border border-[#a03030] bg-[#860000]" />
              <span className="h-[18px] w-[18px] bg-white" />
            </span>
            <span className="flex grow items-center justify-center border-l border-black bg-white">
              <svg viewBox="0 0 5 3" className="h-[3px] w-[5px]" aria-hidden="true">
                <path d="M0 0h5L2.500 3z" fill="#000" />
              </svg>
            </span>
          </button>
        </div>
        <div className="flex h-6 items-center pl-[7px]">
          <Radio group="style" text="竹線 ( 美國線 )" width="w-[153px]" />
          <Check text="顯示漲跌顏色" disabled />
        </div>
        <div className="flex h-[30px] items-end pl-[7px]">
          <Radio group="style" text="OX圖" />
        </div>
        <div className="flex h-[26px] items-center pl-[95px]">
          <span className="w-[60px]">格值:</span>
          <DropDown label="格值" value="絕對數值" width="w-[134px]" />
          <span className="w-1" />
          <Spinner label="格值數值" value="0.0050" width="w-[87px]" />
        </div>
        <div className="mt-[9px] flex h-6 items-center pl-[95px]">
          <label htmlFor="turn" className="w-[60px]">轉折點:</label>
          <Spinner id="turn" value="3" width="w-[69px]" />
        </div>
        <div className="mt-[19px] flex pl-[7px]">
          <Radio group="style" text="雙座標比較" />
        </div>
        <div className="mt-[5px] flex h-[26px] items-center pl-24">
          <label htmlFor="symbol" className="w-[59px]">商品:</label>
          <input id="symbol" defaultValue="TSE 加權指數" className={"h-[26px] w-[87px] pb-1 pl-0.5 leading-4 " + sunken} />
          <button type="button" aria-label="搜尋商品" className={"ml-[9px] flex h-[26px] w-7 items-center justify-center " + raised}>
            <Svg>
              <path d="M1 5l5-2 5 2v9l-5 2-5-2z" fill="#f0b8d0" stroke="#b05888" />
              <path d="M4 6V3a2 2 0 0 1 4 0v3M6 7v8" stroke="#b05888" />
              <circle cx="10" cy="9.500" r="3.500" fill="#b8dcf4" stroke="#5888b8" />
              <path d="M12.500 12l3 3.500" stroke="#8888a0" strokeWidth="2" />
            </Svg>
          </button>
          <span className="ml-[3px]">(X)</span>
        </div>
        <div className="mt-[13px] flex h-6 items-center pl-[7px]">
          <Radio group="style" text="新價線" width="w-[89px]" />
          <label htmlFor="days" className="w-[57px]">天數:</label>
          <Spinner id="days" value="3" width="w-[69px]" />
        </div>
        <div className="mt-[13px] flex pl-[7px]">
          <Radio group="style" text="不顯示主圖" width="w-[129px]" disabled />
          <Check text="顯示模擬K線" />
        </div>
        <hr className="mt-[19px] mr-4 ml-1.5 border-t border-b border-t-[#a0a0a0] border-b-white" />
        <p className="mt-[9px] pl-1.5">座標選擇與格線設定</p>
        <div className="mt-[13px] flex h-6 items-center pl-[7px]">
          <Radio group="axis" text="絕對值(自動)" width="w-[121px]" checked />
          <Radio group="axis" text="絕對值,格距" width="w-[101px]" />
          <Spinner label="絕對值格距" value="0.10" width="w-[79px]" />
          <span className="w-4" />
          <Radio group="axis" text="對數" width="w-[69px]" />
          <Radio group="axis" text="等比,公比" width="w-[88px]" />
          <Spinner label="公比" value="1.10" width="w-[56px]" />
          <span className="w-4" />
          <Radio group="axis" text="百分比,格距" width="w-[101px]" />
          <Spinner label="百分比格距" value="10" width="w-[56px]" />
          <span className="w-8 pl-[3px]">%</span>
          <Radio group="axis" text="黃金比率" />
        </div>
      </div>

      <div className="flex justify-end gap-[7px] pt-[7px] pr-[7px] pb-2">
        <button type="button" className="h-[26px] w-[88px] border-t border-r-2 border-b-2 border-l border-t-white border-r-[#707070] border-b-[#707070] border-l-white">
          完成(K)
        </button>
        <button type="button" className="h-[26px] w-[88px] border-t border-r-2 border-b-2 border-l border-t-white border-r-[#707070] border-b-[#707070] border-l-white">
          取消(C)
        </button>
      </div>
    </section>
  );
}

export default function App() {
  return (
    <div className="relative flex min-h-screen flex-col overflow-hidden bg-black font-['Noto_Sans','Noto_Sans_CJK_TC',sans-serif]">
      <Toolbars />
      <div className="flex grow">
        <Shortcuts />
        <PageStrip />
        <main className="flex min-w-0 grow flex-col border-t-4 border-r-5 border-l-4 border-[#669a96]">
          <div className="flex grow flex-col border border-b-2 border-[#5c1414] border-b-[#a01818]">
            <div className="flex h-[21px] items-end gap-1 pl-px">
              <button type="button" aria-label="選單" className="mb-px flex h-[18px] w-[18px] items-center justify-center rounded-full border border-[#4c4c20] bg-[#2c2c10]">
                <svg viewBox="0 0 6 4" className="h-1 w-1.5" aria-hidden="true">
                  <path d="M0 0h6L3 4z" fill="#d8d8a0" />
                </svg>
              </button>
              <button
                type="button"
                className="h-[19px] bg-[#a8a078] px-px pt-px [clip-path:polygon(8px_0,128px_0,136px_100%,0_100%)]"
              >
                <span
                  className={
                    "block h-[18px] w-[134px] bg-linear-to-b from-[#5c5a00] to-[#1c1c00] pl-1.5 text-left text-base leading-[18px] whitespace-nowrap text-[#f0f048] [clip-path:polygon(8px_0,126px_0,134px_100%,0_100%)] " +
                    serif
                  }
                >
                  台積電 技術分析
                </span>
              </button>
            </div>
            <div className="flex grow">
              <QuotePanel />
              <div className="min-w-0 grow">
                <ChartHeader />
                <PriceChart />
                <BottomBar />
              </div>
            </div>
          </div>
        </main>
      </div>
      <SettingsDialog />
    </div>
  );
}
